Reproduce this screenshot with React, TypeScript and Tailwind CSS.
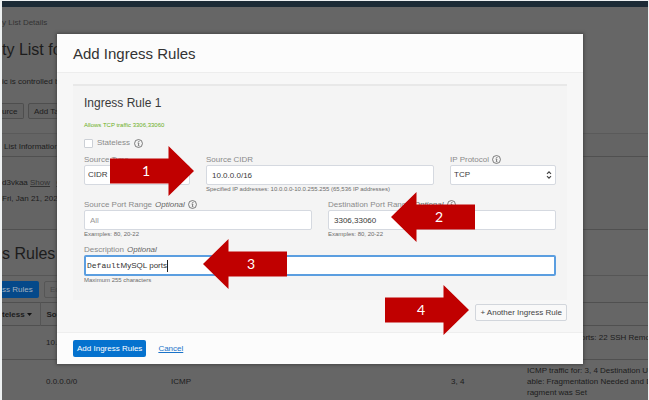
import React from "react";

function InfoIcon() {
  return (
    <svg className="h-[9px] w-[9px] shrink-0" viewBox="0 0 18 18" fill="none" stroke="#555" strokeWidth="1.5" aria-hidden="true">
      <circle cx="9" cy="9" r="7.9" />
      <path d="M7.2 8h2.6L8.6 13.4h2.2" />
      <path d="M9.9 4.2 9.600 6" strokeWidth="1.8" />
    </svg>
  );
}

function Chevrons() {
  return (
    <svg className="pointer-events-none absolute right-1 top-1/2 h-2 w-[6px] -translate-y-1/2" viewBox="0 0 12 18" fill="none" stroke="#444" strokeWidth="2.6" aria-hidden="true">
      <path d="M1.5 6.5 6 2l4.5 4.5M1.5 11.5 6 16l4.5-4.5" />
    </svg>
  );
}

const control =
  "block h-[20px] w-full appearance-none rounded-[2px] border border-[#d5d9e0] bg-white text-[8px] leading-[10px] text-[#3a3a3a] outline-none placeholder:text-[#999]";
const inputClass = control + " px-[5px]";
const selectClass = control + " px-[3px]";

type FieldProps = {
  id: string;
  label: string;
  optional?: boolean;
  info?: boolean;
  hint?: string;
  children: React.ReactNode;
};

function Field({ id, label, optional, info, hint, children }: FieldProps) {
  return (
    <div className="min-w-0">
      <div className="flex h-[11px] items-center gap-[3px] whitespace-nowrap text-[8px] leading-[11px] text-[#8a8a8a]">
        <label htmlFor={id}>
          {label}
          {optional && <i className="ml-[3px] text-[#666]">Optional</i>}
        </label>
        {info && <InfoIcon />}
      </div>
      {children}
      {hint && <p className="whitespace-nowrap text-[6px] leading-[8px] text-[#6c6c6c]">{hint}</p>}
    </div>
  );
}

function Arrow({ n, left, className }: { n: number; left?: boolean; className: string }) {
  return (
    <div className={"absolute flex h-[50px] items-center justify-center " + className}>
      <svg className="absolute inset-0 h-full w-full" viewBox="0 0 84 50" preserveAspectRatio="none" fill="#c00000" aria-hidden="true">
        <path d={left ? "M0 25 25.500 0V12.500H84V37.500H25.500V50Z" : "M84 25 58.500 0V12.500H0V37.500H58.500V50Z"} />
      </svg>
      <span className={"relative font-['Lato',sans-serif] text-[14px] leading-[20px] text-white " + (left ? "pl-3" : "pr-3")}>{n}</span>
    </div>
  );
}

function ConsolePage() {
  return (
    <div className="ml-[2px] mr-px mt-px h-[399px] overflow-hidden bg-[#666] text-[8px] leading-[11px] text-[#1c1c1c]">
      <div className="h-[6px] bg-[#1c2b36]" />
      <nav className="pt-[10px] text-[#333]">y List Details</nav>
      <h1 className="pt-[12px] text-[16px] leading-[20px]">ty List fo</h1>
      <p className="whitespace-nowrap pt-[16px]">ic is controlled by</p>
      <div className="mt-4 flex gap-1">
        <button className="h-4 w-[22px] overflow-hidden rounded-r-[2px] border border-l-0 border-[#4e4e4e] bg-[#626262] text-left">urce</button>
        <button className="h-4 w-[60px] whitespace-nowrap rounded-[2px] border border-[#4e4e4e] bg-[#626262] pl-[5px] text-left">Add Tags</button>
      </div>
      <div className="mt-[14px] border-t border-[#5a5a5a] bg-[#646464]">
        <div className="h-[23px] whitespace-nowrap border-b border-[#505050] pl-[2px] pt-[7px]">List Information</div>
        <div className="h-[73px] whitespace-nowrap border-b border-[#505050] pt-[20px]">
          <p>d3vkaa <a href="#show" className="text-[#333] underline">Show</a> <a href="#copy" className="ml-1 text-[#333] underline">Copy</a></p>
          <p className="pt-[5px]">Fri, Jan 21, 2022</p>
        </div>
      </div>
      <h2 className="pt-[14px] text-[16px] leading-[20px]">s Rules</h2>
      <div className="mt-[11px] border-t border-[#565656] pt-[5px]">
        <div className="flex gap-[5px]">
          <button className="h-[17px] w-[37px] overflow-hidden whitespace-nowrap rounded-r-[2px] bg-[#05498a] text-left text-[#a3b1bf]">ss Rules</button>
          <button className="h-[17px] w-[50px] rounded-[2px] border border-[#565656] pl-[5px] text-left text-[#484848]">Edit</button>
        </div>
      </div>
      <table className="mt-1 w-full table-fixed border-collapse text-left">
        <colgroup>
          <col className="w-[38px]" />
          <col className="w-[131px]" />
          <col className="w-[280px]" />
          <col className="w-[72px]" />
          <col />
        </colgroup>
        <thead>
          <tr className="h-[23px] border-y border-[#505050]">
            <th className="whitespace-nowrap border-r border-[#555]">
              <span className="flex items-center gap-[2px]">teless
                <svg className="h-[3px] w-[5px]" viewBox="0 0 10 6" fill="#111" aria-hidden="true"><path d="M0 0h10L5 6z" /></svg>
              </span>
            </th>
            <th className="pl-[6px]">Source</th>
            <th /><th /><th />
          </tr>
        </thead>
        <tbody>
          <tr className="h-[34px] border-b border-[#505050]">
            <td /><td className="pl-[6px]">10.0.0.0/16</td><td /><td />
            <td className="whitespace-nowrap pb-[10px] pl-[58px]">orts: 22 SSH Remo</td>
          </tr>
          <tr className="h-[44px]">
            <td /><td className="pl-[6px]">0.0.0.0/0</td><td>ICMP</td><td>3, 4</td>
            <td className="whitespace-nowrap pl-1">ICMP traffic for: 3, 4 Destination Un<br />able: Fragmentation Needed and Do<br />ragment was Set</td>
          </tr>
        </tbody>
      </table>
    </div>
  );
}

export default function App() {
  return (
    <div className="relative overflow-hidden bg-[#eef1f2] font-['Liberation_Sans',Arial,sans-serif]">
      <ConsolePage />
      <section role="dialog" aria-labelledby="dialog-title" className="absolute inset-x-[57px] top-[34px] mr-[9px] bg-[#f7f7f7] shadow-[0_0_3px_1px_rgba(50,50,50,0.6)]">
        <header className="border-b border-[#ededed] bg-[#fcfcfc] px-4 pb-[8px] pt-[10px]">
          <h2 id="dialog-title" className="text-[15px] leading-[20px] text-[#333]">Add Ingress Rules</h2>
        </header>
        <div className="px-4 pb-[11px] pt-[11px]">
          <div className="border-t-2 border-[#e8e8e8] bg-[#f4f4f4] px-[11px] pb-4 pt-[9px]">
            <h3 className="text-[12px] leading-[16px] text-[#3a3a3a]">Ingress Rule 1</h3>
            <p className="mt-[10px] text-[6px] leading-[8px] text-[#6aaf1c]">Allows TCP traffic 3306,33060</p>
            <div className="mt-2 flex h-[12px] items-center gap-1 text-[8px] leading-[12px] text-[#8a8a8a]">
              <input id="stateless" type="checkbox" className="h-[9px] w-[9px] appearance-none rounded-[1px] border border-[#ccd0d6] bg-white" />
              <label htmlFor="stateless">Stateless</label>
              <InfoIcon />
            </div>
            <div className="mt-[5px] grid grid-cols-[106fr_228fr_106fr] gap-x-4">
              <Field id="source-type" label="Source Type">
                <div className="relative">
                  <select id="source-type" className={selectClass}><option>CIDR</option></select>
                  <Chevrons />
                </div>
              </Field>
              <Field id="source-cidr" label="Source CIDR" hint="Specified IP addresses: 10.0.0.0-10.0.255.255 (65,536 IP addresses)">
                <input id="source-cidr" className={inputClass} defaultValue="10.0.0.0/16" />
              </Field>
              <Field id="protocol" label="IP Protocol" info>
                <div className="relative">
                  <select id="protocol" className={selectClass}><option>TCP</option></select>
                  <Chevrons />
                </div>
              </Field>
            </div>
            <div className="mt-[6px] grid grid-cols-2 gap-x-4">
              <Field id="source-port" label="Source Port Range" optional info hint="Examples: 80, 20-22">
                <input id="source-port" className={inputClass} placeholder="All" />
              </Field>
              <Field id="dest-port" label="Destination Port Range" optional info hint="Examples: 80, 20-22">
                <input id="dest-port" className={inputClass} defaultValue="3306,33060" />
              </Field>
            </div>
            <div className="mt-[6px]">
              <Field id="description" label="Description" optional hint="Maximum 255 characters">
                <div id="description" role="textbox" aria-label="Description" contentEditable suppressContentEditableWarning className="flex h-[21px] items-center rounded-[2px] border-2 border-[#5b9ee0] bg-white pl-px text-[8px] leading-[12px] text-[#333] outline-none">
                  <span className="font-['Liberation_Mono',monospace]">Default</span>
                  <span className="border-r border-[#222]">MySQL ports</span>
                </div>
              </Field>
            </div>
          </div>
          <div className="mt-1 flex justify-end">
            <button className="h-[17px] whitespace-nowrap rounded-[2px] border border-[#d2d6dc] bg-[#f9f9f9] px-1 text-[8px] leading-[12px] text-[#444]">+ Another Ingress Rule</button>
          </div>
        </div>
        <footer className="flex items-center gap-3 border-t border-[#eee] bg-[#fcfcfc] px-4 py-[7px] text-[8px] leading-[12px]">
          <button className="h-[17px] whitespace-nowrap rounded-[2px] bg-[#0572ce] px-1 text-white">Add Ingress Rules</button>
          <a href="#cancel" className="text-[#1a73c9] underline">Cancel</a>
        </footer>
      </section>
      <Arrow n={1} className="left-[110px] top-[146px] w-[84px]" />
      <Arrow n={2} left className="left-[391px] top-[192px] w-[84px]" />
      <Arrow n={3} left className="left-[203px] top-[239px] w-[84px]" />
      <Arrow n={4} className="left-[385px] top-[285px] w-[84px]" />
    </div>
  );
}
